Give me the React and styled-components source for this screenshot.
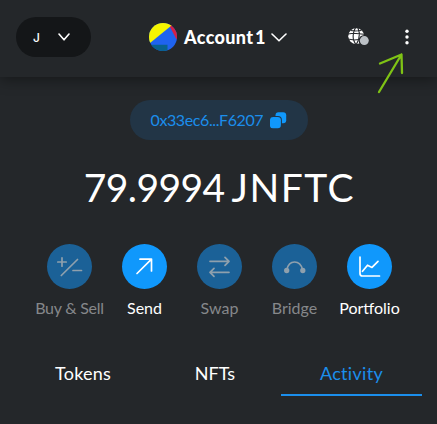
import React from "react";
import styled, { createGlobalStyle } from "styled-components";

const Global = createGlobalStyle`
  * { box-sizing: border-box; }
  body { margin: 0; background: #24272a; }
`;

const Page = styled.main`
  position: relative;
  width: 437px;
  height: 424px;
  overflow: hidden;
  background: #24272a;
  color: #fff;
  font-family: Lato, "Open Sans", sans-serif;
  white-space: nowrap;
`;

const Header = styled.header`
  height: 77px;
  display: flex;
  align-items: flex-start;
  padding: 17px 0 0 16px;
  box-shadow: 0 2px 14px rgba(0, 0, 0, 0.42);
`;

const NetworkPicker = styled.button`
  width: 75px;
  height: 40px;
  border: 0;
  border-radius: 20px;
  background: #141618;
  color: #fff;
  display: flex;
  align-items: center;
  gap: 18px;
  padding: 0 0 0 17px;
  font: 500 12px Inter, sans-serif;
`;

const AccountPicker = styled.div`
  height: 40px;
  margin-left: 58px;
  width: 140px;
  display: flex;
  align-items: center;
`;

const AccountName = styled.span`
  width: 83px;
  margin: 0 4px 0 7px;
  font-size: 18px;
  font-weight: 900;
  line-height: 24px;
  letter-spacing: 0.35px;
  word-spacing: -3px;
`;

const HeaderActions = styled.div`
  display: flex;
  align-items: center;
  height: 40px;
  margin-left: 59px;
  gap: 35px;
`;

const Overview = styled.section`
  display: flex;
  flex-direction: column;
  align-items: center;
  padding-top: 23px;
`;

const AddressPill = styled.button`
  width: 178px;
  height: 40px;
  border: 0;
  border-radius: 20px;
  background: #223546;
  color: #1b8eec;
  display: flex;
  align-items: center;
  padding: 0 0 0 21px;
  gap: 5px;
  font: 400 16px Lato, sans-serif;
`;

const AddressText = styled.span`
  width: 114px;
  margin-top: -2px;
  text-align: left;
  letter-spacing: -0.4px;
`;

const Balance = styled.h1`
  display: flex;
  gap: 7px;
  margin: 23px 0 0 2px;
  height: 48px;
  font-size: 39px;
  font-weight: 400;
  line-height: 48px;
`;

const Amount = styled.span`
  letter-spacing: -0.6px;
`;

const Unit = styled.span`
  letter-spacing: 1.5px;
`;

const Actions = styled.nav`
  display: grid;
  grid-template-columns: repeat(5, 75px);
  margin: 33px 0 0 2px;
`;

const Action = styled.div`
  display: flex;
  flex-direction: column;
  align-items: center;
  gap: 9px;
  color: ${(p) => (p.$off ? "#86888a" : "#fff")};
`;

const ActionCircle = styled.span`
  width: 45px;
  height: 45px;
  border-radius: 50%;
  background: ${(p) => (p.$off ? "#1b6197" : "#1098fc")};
  color: ${(p) => (p.$off ? "#8fa0ad" : "#fff")};
  display: grid;
  place-items: center;
`;

const ActionLabel = styled.span`
  font-size: 16px;
  line-height: 20px;
  letter-spacing: ${(p) => p.$track || "0"};
`;

const Tabs = styled.div`
  display: grid;
  grid-template-columns: 132px 132px 141px;
  margin: 43px 0 0 17px;
`;

const Tab = styled.div`
  height: 35px;
  padding-top: 1px;
  text-align: center;
  font-size: 18px;
  line-height: 22px;
  letter-spacing: ${(p) => p.$track || "0"};
  color: ${(p) => (p.$active ? "#1b8eec" : "#fff")};
  border-bottom: 2px solid ${(p) => (p.$active ? "#1b8eec" : "transparent")};
`;

const Arrow = styled.svg`
  position: absolute;
  left: 370px;
  top: 45px;
`;

const Chevron = ({ w, h }) => (
  <svg width={w} height={h} viewBox={`0 0 ${w} ${h}`} fill="none" stroke="currentColor" strokeWidth="1.6" strokeLinecap="round" strokeLinejoin="round">
    <path d={`M1 1 L${w / 2} ${h - 1.2} L${w - 1} 1`} />
  </svg>
);

const Avatar = () => (
  <svg width="28" height="28" viewBox="0 0 28 28">
    <clipPath id="avatar"><circle cx="14" cy="14" r="14" /></clipPath>
    <g clipPath="url(#avatar)">
      <rect width="28" height="28" fill="#1f63ef" />
      <path d="M20 0H28V16H27.3L21 4Z" fill="#d51f46" />
      <path d="M0 0H22L22.5 2.5L1 20H0Z" fill="#f5f500" />
      <path d="M0 21.8H18.5V28H0Z" fill="#08628e" />
    </g>
  </svg>
);

const Globe = () => (
  <svg width="22" height="18" viewBox="0 0 22 18">
    <circle cx="8.2" cy="8.2" r="7.9" fill="#fff" />
    <g fill="none" stroke="#24272a" strokeWidth="1.1">
      <path d="M0 6L5.5 5.2L16 6.2M0 11L6 12L17 11M7.5 0Q4.2 4 5.5 12L8 17M10 0L11.5 5.5L10.5 12L8 17M2.5 2.5L7 3L13.5 2.5" />
    </g>
    <circle cx="16.3" cy="12.6" r="5.7" fill="#24272a" />
    <circle cx="16.3" cy="12.6" r="4.5" fill="#bbc0c5" />
  </svg>
);

const Dots = () => (
  <svg width="4" height="16" viewBox="0 0 4 16" fill="#fff">
    <circle cx="2" cy="2.3" r="1.7" />
    <circle cx="2" cy="8" r="1.7" />
    <circle cx="2" cy="13.7" r="1.7" />
  </svg>
);

const Copy = () => (
  <svg width="17" height="17" viewBox="0 0 17 17">
    <rect x="5.5" y="0.3" width="10.7" height="11" rx="3" fill="#1098fc" />
    <rect x="-1.3" y="3.9" width="13.2" height="13.4" rx="4" fill="#223546" />
    <rect x="-0.1" y="5.1" width="11" height="11.2" rx="3.2" fill="#1098fc" />
  </svg>
);

const paths = {
  buy: <path d="M10.8 18H19.2M15 13.8V22.2M14.3 31.5L30.5 15.5M26 26.5H34.5" />,
  send: <path d="M15 29.5L29.5 15.2M18 15.2H29.5V27" />,
  swap: <path d="M13 17.3H31.5M28 13.3L32 17.3L28 21.3M32 28.3H13.5M17 24.3L13 28.3L17 32.3" />,
  bridge: (
    <>
      <path d="M15 25.5C17 15.5 28 15.5 30.5 25.5" />
      <circle cx="14.7" cy="26.5" r="1.8" fill="currentColor" />
      <circle cx="30.8" cy="26.5" r="1.8" fill="currentColor" />
    </>
  ),
  portfolio: <path d="M13 13V29.5Q13 32 15.5 32H32.5M15.5 27.3L20.5 21.2L25 23.4L31 17.4" />,
};

const ActionIcon = ({ name }) => (
  <svg width="45" height="45" viewBox="0 0 45 45" fill="none" stroke="currentColor" strokeWidth="1.7" strokeLinecap="round" strokeLinejoin="round">
    {paths[name]}
  </svg>
);

const actions = [
  { name: "buy", label: "Buy & Sell", off: true, track: "-0.25px" },
  { name: "send", label: "Send" },
  { name: "swap", label: "Swap", off: true },
  { name: "bridge", label: "Bridge", off: true },
  { name: "portfolio", label: "Portfolio" },
];

export default function App() {
  return (
    <Page>
      <Global />
      <Header>
        <NetworkPicker>J<Chevron w={12} h={8} /></NetworkPicker>
        <AccountPicker>
          <Avatar />
          <AccountName>Account 1</AccountName>
          <Chevron w={16} h={9} />
        </AccountPicker>
        <HeaderActions>
          <Globe />
          <Dots />
        </HeaderActions>
      </Header>
      <Overview>
        <AddressPill>
          <AddressText>0x33ec6...F6207</AddressText>
          <Copy />
        </AddressPill>
        <Balance>
          <Amount>79.9994</Amount>
          <Unit>JNFTC</Unit>
        </Balance>
        <Actions>
          {actions.map((a) => (
            <Action key={a.name} $off={a.off}>
              <ActionCircle $off={a.off}><ActionIcon name={a.name} /></ActionCircle>
              <ActionLabel $track={a.track}>{a.label}</ActionLabel>
            </Action>
          ))}
        </Actions>
      </Overview>
      <Tabs>
        <Tab $track="0.2px">Tokens</Tab>
        <Tab>NFTs</Tab>
        <Tab $active $track="0.3px">Activity</Tab>
      </Tabs>
      <Arrow width="40" height="52" viewBox="0 0 40 52" fill="none" stroke="#7fc315" strokeWidth="2.3" strokeLinecap="round" strokeLinejoin="round">
        <path d="M9 47L31.5 9.5M10 18.5L31.5 9.5L32 28" />
      </Arrow>
    </Page>
  );
}
